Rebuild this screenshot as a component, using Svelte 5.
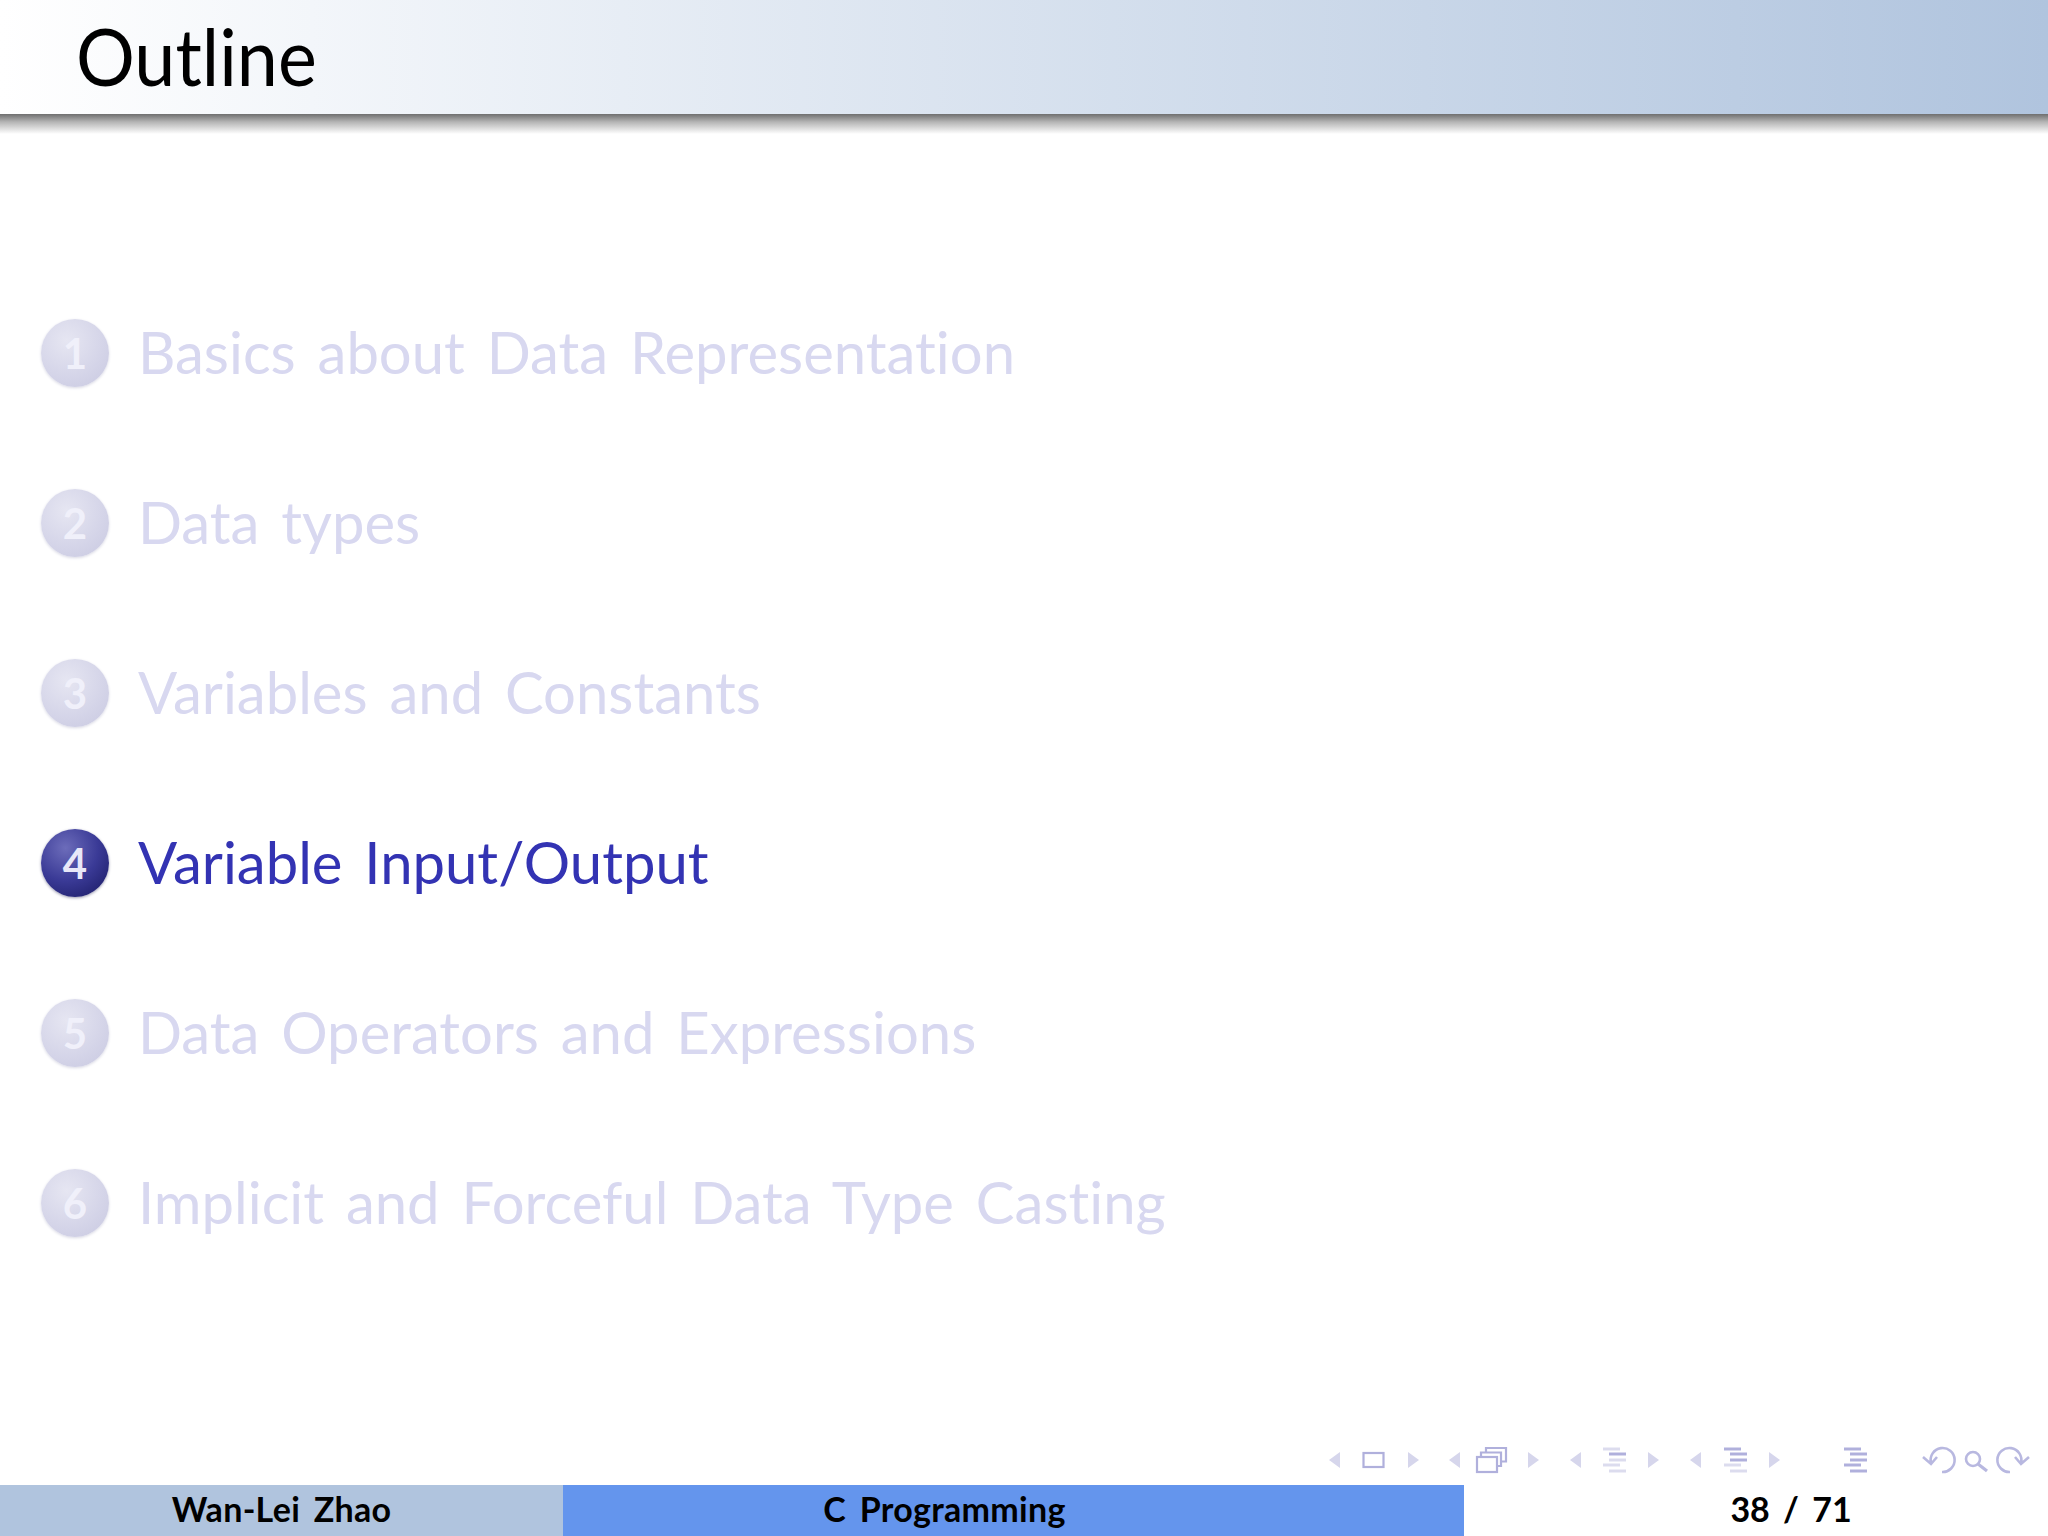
<script>
  const sections = [
    { n: 1, title: 'Basics about Data Representation' },
    { n: 2, title: 'Data types' },
    { n: 3, title: 'Variables and Constants' },
    { n: 4, title: 'Variable Input/Output', active: true },
    { n: 5, title: 'Data Operators and Expressions' },
    { n: 6, title: 'Implicit and Forceful Data Type Casting' }
  ];

  // left edge of each nav triangle, they come in prev/next pairs
  const prev = [1329, 1449, 1570, 1690];
  const next = [1408, 1528, 1648, 1769];

  // indented lines icon: x offset of each row, and which rows are lit
  const rows = [
    { y: 1449, dx: 0 },
    { y: 1454, dx: 6 },
    { y: 1460, dx: 6 },
    { y: 1465, dx: 0 },
    { y: 1471, dx: 6 }
  ];
  const lines = [
    { x: 1603, lit: [1] },
    { x: 1724, lit: [0, 1, 2] },
    { x: 1844, lit: [0, 1, 2, 3, 4] }
  ];
</script>

<div class="slide">
  <header class="head">
    <h1>Outline</h1>
  </header>
  <div class="shadow"></div>

  <ol class="toc">
    {#each sections as s}
      <li class:active={s.active}>
        <span class="ball">{s.n}</span>
        <span class="label">{s.title}</span>
      </li>
    {/each}
  </ol>

  <nav class="navsyms">
    <svg width="720" height="52" viewBox="1328 1433 720 52" fill="none" stroke="#b0b0dc" stroke-width="2.2">
      {#each prev as x}
        <polygon points="{x + 11},1452 {x + 11},1468 {x},1460" fill="#d6d6ec" stroke="none" />
      {/each}
      {#each next as x}
        <polygon points="{x},1452 {x},1468 {x + 11},1460" fill="#d6d6ec" stroke="none" />
      {/each}

      <rect x="1363.5" y="1453" width="20" height="14" />

      <rect x="1477" y="1457" width="20" height="15" />
      <path d="M1481 1457v-4.500h20v13.500h-4M1486 1452.500v-4.500h20v13.500h-5" />

      {#each lines as l}
        {#each rows as r, i}
          <path
            d="M{l.x + r.dx} {r.y}h17"
            stroke-width="3"
            stroke={l.lit.includes(i) ? '#b0b0dc' : '#dcdcee'}
          />
        {/each}
      {/each}

      <g stroke-width="2.6" stroke="#b8b8e0">
        <path d="M1923 1457l8 7 6-7M1931 1463a12 12 0 1 1 11 9" />
        <circle cx="1973" cy="1459" r="7" />
        <path d="M1978 1464l9 7" stroke-width="3.2" />
        <path d="M2029 1457l-8 7-6-7M2021 1463a12 12 0 1 0-11 9" />
      </g>
    </svg>
  </nav>

  <footer class="foot">
    <div class="author">Wan-Lei Zhao</div>
    <div class="course">C Programming</div>
    <div class="page">38 / 71</div>
  </footer>
</div>

<style>
  :global(body) {
    margin: 0;
    background: #fff;
  }

  .slide {
    display: flex;
    flex-direction: column;
    height: 1536px;
    font-family: "Lato", "Open Sans", sans-serif;
    font-variant-ligatures: none;
    color: #000;
    overflow: hidden;
  }

  .head {
    height: 114px;
    background: linear-gradient(to right, #fff, #b0c4de);
    flex: none;
  }

  h1 {
    margin: 0;
    padding: 11px 0 0 76px;
    font-size: 80px;
    font-weight: 400;
    line-height: 88px;
    transform: scaleX(0.92);
    transform-origin: 76px 0;
  }

  .shadow {
    height: 20px;
    flex: none;
    background: linear-gradient(to bottom, #6f6f6f, #b5b5b5 40%, #fff);
  }

  .toc {
    list-style: none;
    margin: 0;
    padding: 185px 0 0 41px;
    flex: 1;
    display: flex;
    flex-direction: column;
    gap: 102px;
  }

  li {
    display: flex;
    align-items: center;
    height: 68px;
    gap: 29px;
    font-size: 58px;
    color: #d8d8f0;
    word-spacing: 7px;
  }

  li.active {
    color: #3333b3;
  }

  .label {
    margin-top: -4px;
  }

  .ball {
    flex: none;
    width: 68px;
    height: 68px;
    border-radius: 50%;
    display: flex;
    align-items: center;
    justify-content: center;
    font-size: 42px;
    font-weight: 700;
    color: #f0f0fa;
    background: radial-gradient(circle at 38% 32%, #e6e6f2, #d4d4e8 60%, #c8c8e0);
    box-shadow: 0 1px 3px #d8d8e4;
  }

  .active .ball {
    color: #e8e8f8;
    background: radial-gradient(circle at 36% 28%, #6c6cba, #3a3a96 50%, #1e1e6a 90%);
    box-shadow: 0 1px 3px #9a9ab0;
  }

  .navsyms {
    height: 52px;
    flex: none;
    display: flex;
    justify-content: flex-end;
  }

  .foot {
    height: 51px;
    flex: none;
    display: flex;
    font-size: 34px;
    font-weight: 700;
    line-height: 47px;
    letter-spacing: 0.3px;
    word-spacing: 5px;
    text-align: center;
  }

  .author {
    width: 563px;
    background: #b0c4de;
  }

  .course {
    box-sizing: border-box;
    width: 901px;
    padding-right: 138px;
    background: #6495ed;
  }

  .page {
    flex: 1;
    padding-left: 70px;
    letter-spacing: 0;
  }
</style>
